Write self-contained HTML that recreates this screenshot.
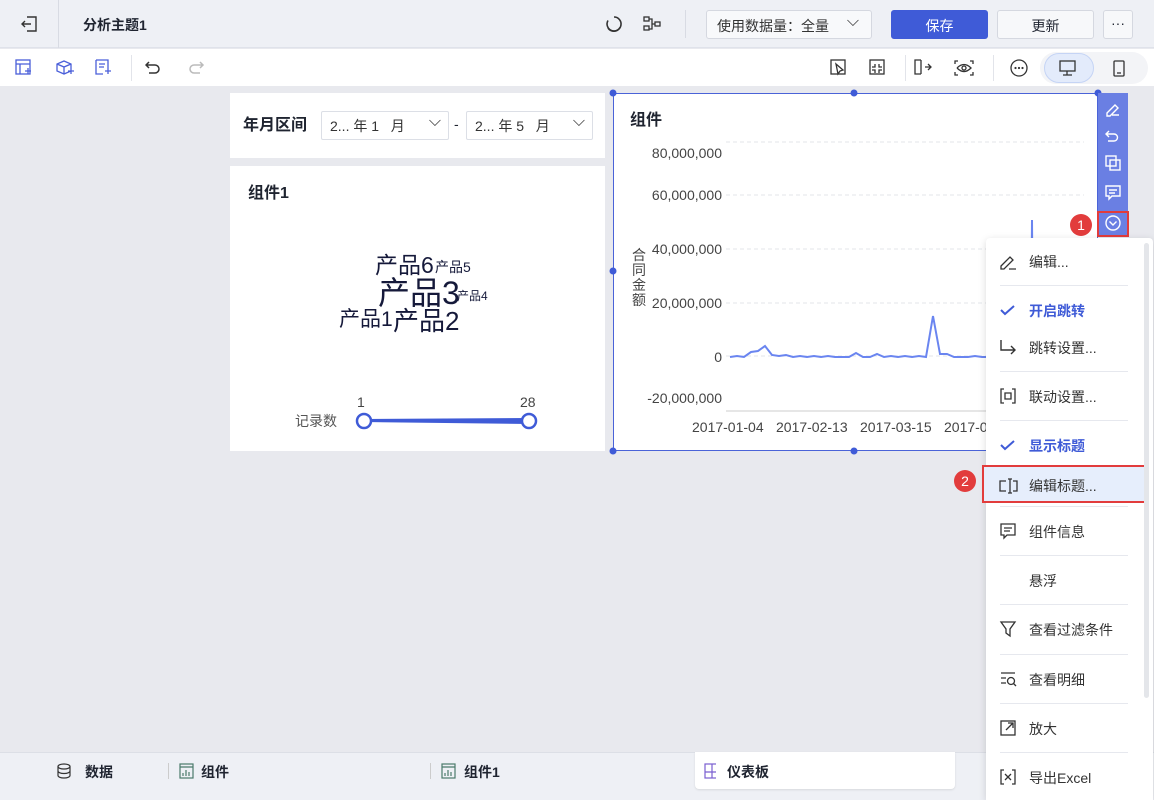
<!DOCTYPE html>
<html><head><meta charset="utf-8"><style>
*{box-sizing:border-box;margin:0;padding:0}
html,body{width:1154px;height:800px;overflow:hidden}
body{background:#e8e9ee;font-family:"Liberation Sans","Noto Sans CJK SC",sans-serif;color:#1f2430;position:relative}
.abs{position:absolute}
.top{left:0;top:0;width:1154px;height:48px;background:#eef0f5;border-bottom:1px solid #dfe2ea}
.tb{left:0;top:49px;width:1154px;height:37px;background:#fff}
.card{background:#fff}
.t{font-size:14px;white-space:nowrap}
.btn{border:1px solid #d5d8e0;border-radius:3px;background:#f7f8fa;font-size:14px;text-align:center}
.menu{left:986px;top:238px;width:167px;height:562px;background:#fff;border-radius:4px 4px 0 0;box-shadow:0 2px 8px rgba(0,0,0,.15)}
.mi{position:absolute;left:0;width:167px;height:40px;font-size:14px;color:#333}
.mi span{position:absolute;left:43px;top:11px}
.sep{position:absolute;left:14px;width:128px;height:1px;background:#e6e8ee}
.ic{position:absolute;left:12px;top:10px}
</style></head><body>
<div class="abs top"></div>
<div class="abs" style="left:58px;top:0;width:1px;height:48px;background:#d8dbe3"></div>
<svg class="abs" style="left:20px;top:15px" width="18" height="18" viewBox="0 0 18 18" fill="none" stroke="#333" stroke-width="1.4"><path d="M7 2h9v14H7M2 9h9M5 6L2 9l3 3"/></svg>
<div class="abs t" style="left:83px;top:15px;font-weight:bold">分析主题1</div>
<svg class="abs" style="left:604px;top:14px" width="20" height="20" viewBox="0 0 20 20" fill="none" stroke="#333" stroke-width="1.6"><path d="M10 3a7 7 0 1 1-6 3.5"/><path d="M16 13.5A7 7 0 0 1 4 14"/></svg>
<svg class="abs" style="left:642px;top:14px" width="20" height="20" viewBox="0 0 20 20" fill="none" stroke="#333" stroke-width="1.3"><rect x="2" y="3" width="5" height="4"/><rect x="2" y="12" width="5" height="4"/><rect x="13" y="8" width="5" height="4"/><path d="M7 5h3v10H7M10 10h3"/></svg>
<div class="abs" style="left:685px;top:10px;width:1px;height:28px;background:#d8dbe3"></div>
<div class="abs btn" style="left:706px;top:10px;width:166px;height:29px;background:#f8f9fb;text-align:left;padding:5px 10px;color:#333">使用数据量：全量 <span style="position:absolute;right:12px;top:2px;font-size:16px">⌵</span></div>
<div class="abs btn" style="left:891px;top:10px;width:97px;height:29px;background:#3f5bd7;border-color:#3f5bd7;color:#fff;padding-top:5px">保存</div>
<div class="abs btn" style="left:997px;top:10px;width:97px;height:29px;padding-top:5px">更新</div>
<div class="abs btn" style="left:1103px;top:10px;width:30px;height:29px;padding-top:4px">···</div>

<div class="abs tb"></div>
<svg class="abs" style="left:15px;top:59px" width="110" height="18" viewBox="0 0 110 18" fill="none" stroke="#4a5fd9" stroke-width="1.3"><rect x="1" y="1" width="14" height="14"/><path d="M1 5h14M5 5v10M10 12h6M13 9v6"/><path d="M49 2l7 3v7l-7 3-7-3V5zM42 5l7 3 7-3M49 8v7M53 12h6M56 9v6"/><path d="M81 1h12v8M81 1v14h7M84 5h6M84 8h5M90 12h6M93 9v6"/></svg>
<div class="abs" style="left:131px;top:55px;width:1px;height:26px;background:#e2e4ea"></div>
<svg class="abs" style="left:145px;top:58px" width="60" height="18" viewBox="0 0 60 18" fill="none" stroke-width="1.5"><path stroke="#333" d="M4 4L1 7l3 3M1 7h9a4 4 0 0 1 0 8H4"/><path stroke="#bbb" d="M55 4l3 3-3 3M58 7h-9a4 4 0 0 0 0 8h6"/></svg>
<svg class="abs" style="left:829px;top:58px" width="300" height="20" viewBox="0 0 300 20" fill="none" stroke="#333" stroke-width="1.3"><rect x="2" y="2" width="14" height="14"/><path d="M7 6l7 6-3 1-2 3z"/><rect x="41" y="2" width="14" height="14"/><path d="M46 6v3h-3M50 6v3h3M46 15v-3h-3M50 15v-3h3"/><path d="M92 2h-6v14h6M92 2v14M96 9h6M99 6l3 3-3 3"/><path d="M129 3h-3v3M141 3h3v3M129 17h-3v-3M141 17h3v-3M128 10q7-7 14 0q-7 7-14 0"/><circle cx="135" cy="10" r="2"/><circle cx="190" cy="10" r="8"/><g fill="#333" stroke="none"><circle cx="186.5" cy="10" r="1.1"/><circle cx="190" cy="10" r="1.1"/><circle cx="193.5" cy="10" r="1.1"/></g></svg>
<div class="abs" style="left:905px;top:55px;width:1px;height:26px;background:#e2e4ea"></div>
<div class="abs" style="left:993px;top:55px;width:1px;height:26px;background:#e2e4ea"></div>
<div class="abs" style="left:1040px;top:52px;width:108px;height:32px;background:#f3f4f7;border-radius:16px"></div>
<div class="abs" style="left:1044px;top:53px;width:50px;height:30px;background:#e3ebfb;border:1px solid #c5d4f5;border-radius:15px"></div>
<svg class="abs" style="left:1058px;top:59px" width="75" height="18" viewBox="0 0 75 18" fill="none" stroke="#333" stroke-width="1.3"><rect x="2" y="2" width="15" height="10"/><path d="M9 12v4M5 16h9"/><rect x="56" y="2" width="10" height="15" rx="1"/><path d="M59 14h4"/></svg>

<div class="abs card" style="left:230px;top:93px;width:375px;height:65px"></div>
<div class="abs" style="left:243px;top:115px;font-size:16px;font-weight:bold;line-height:22px">年月区间</div>
<div class="abs" style="left:321px;top:111px;width:128px;height:29px;border:1px solid #dcdfe6;border-radius:2px;font-size:14px;padding:4px 8px;color:#333">2... 年 1 &nbsp; 月<span style="position:absolute;right:7px;top:1px;font-size:16px">⌵</span></div>
<div class="abs" style="left:454px;top:116px;font-size:14px">-</div>
<div class="abs" style="left:466px;top:111px;width:127px;height:29px;border:1px solid #dcdfe6;border-radius:2px;font-size:14px;padding:4px 8px;color:#333">2... 年 5 &nbsp; 月<span style="position:absolute;right:7px;top:1px;font-size:16px">⌵</span></div>

<div class="abs card" style="left:230px;top:166px;width:375px;height:285px"></div>
<div class="abs" style="left:248px;top:179px;font-size:16px;font-weight:bold">组件1</div>
<div class="abs" style="left:375px;top:246px;font-size:23px;color:#15193a">产品6</div>
<div class="abs" style="left:435px;top:257px;font-size:14px;color:#15193a">产品5</div>
<div class="abs" style="left:378px;top:268px;font-size:32px;color:#15193a">产品3</div>
<div class="abs" style="left:457px;top:287px;font-size:12px;color:#15193a">产品4</div>
<div class="abs" style="left:339px;top:303px;font-size:21px;color:#15193a">产品1</div>
<div class="abs" style="left:393px;top:301px;font-size:26px;color:#15193a">产品2</div>
<div class="abs" style="left:295px;top:411px;font-size:14px;color:#555">记录数</div>
<div class="abs" style="left:357px;top:394px;font-size:14px;color:#444">1</div>
<div class="abs" style="left:520px;top:394px;font-size:14px;color:#444">28</div>
<svg class="abs" style="left:355px;top:410px" width="185" height="22"><path d="M9 9 L174 8 L174 14 L9 12z" fill="#3f5bd7"/><circle cx="9" cy="11" r="7" fill="#fff" stroke="#3f5bd7" stroke-width="2.5"/><circle cx="174" cy="11" r="7" fill="#fff" stroke="#3f5bd7" stroke-width="2.5"/></svg>

<div class="abs card" style="left:613px;top:93px;width:485px;height:358px;border:1.5px solid #4a63d8"></div>
<svg class="abs" style="left:608px;top:88px" width="500" height="370"><g fill="#3f5bd7"><circle cx="5" cy="5" r="3.5"/><circle cx="246" cy="5" r="3.5"/><circle cx="490" cy="5" r="3.5"/><circle cx="5" cy="183" r="3.5"/><circle cx="5" cy="363" r="3.5"/><circle cx="246" cy="363" r="3.5"/></g></svg>
<div class="abs" style="left:630px;top:106px;font-size:16px;font-weight:bold">组件</div>
<svg class="abs" style="left:614px;top:130px" width="470" height="310" font-family="Liberation Sans, sans-serif" font-size="14" fill="#444">
<g stroke="#e3e5ea" stroke-dasharray="4 3"><path d="M112 12H470M112 65H470M112 119H470M112 173H470M112 226H470"/></g>
<path d="M112 281H470" stroke="#ccc"/>
<g text-anchor="end"><text x="108" y="28">80,000,000</text><text x="108" y="70">60,000,000</text><text x="108" y="124">40,000,000</text><text x="108" y="178">20,000,000</text><text x="108" y="232">0</text><text x="108" y="273">-20,000,000</text></g>
<text x="78" y="302">2017-01-04</text><text x="162" y="302">2017-02-13</text><text x="246" y="302">2017-03-15</text><text x="330" y="302">2017-0</text>
<g font-size="14" fill="#444"><text x="18" y="130">合</text><text x="18" y="145">同</text><text x="18" y="160">金</text><text x="18" y="175">额</text></g>
<path d="M116 227L123 226L130 227L137 222L144 221L151 216L158 225L165 226L172 225L179 227L186 226L193 227L200 226L207 227L214 226L221 227L228 227L235 227L242 223L249 227L256 227L263 224L270 227L277 226L284 227L291 226L298 227L305 226L312 227L319 186L326 224L333 224L340 227L347 227L354 227L361 226L368 227L375 227L382 227L389 227L396 226L403 225L410 227L417 226 L418 90 L419 226" fill="none" stroke="#6a85f0" stroke-width="2"/>
</svg>
<div class="abs" style="left:1098px;top:93px;width:30px;height:144px;background:#6a7fe3"></div>
<svg class="abs" style="left:1098px;top:93px" width="30" height="144" fill="none" stroke="#fff" stroke-width="1.4"><path d="M9 20l8-8 3 3-8 8H9zM14 22h7"/><path d="M11 38l-3 3 3 3M8 41h8a3.5 3.5 0 0 1 0 7h-6"/><rect x="8" y="63" width="10" height="10"/><rect x="12" y="67" width="10" height="10"/><path d="M8 93h14v10H14l-3 3v-3H8zM11 97h8M11 100h6"/><circle cx="15" cy="130" r="7"/><path d="M11.5 128.5l3.5 3.5 3.5-3.5"/></svg>
<div class="abs" style="left:1097px;top:211px;width:32px;height:26px;border:2px solid #e23c3c"></div>
<div class="abs" style="left:1070px;top:214px;width:22px;height:22px;border-radius:11px;background:#e23c3c;color:#fff;font-size:14px;text-align:center;line-height:22px">1</div>

<div class="abs" style="left:0;top:752px;width:1154px;height:48px;background:#eef0f5;border-top:1px solid #dcdfe6"></div>
<div class="abs" style="left:695px;top:752px;width:260px;height:37px;background:#fff;border-radius:0 0 4px 4px;box-shadow:0 1px 2px rgba(0,0,0,.1)"></div>
<svg class="abs" style="left:56px;top:763px" width="660" height="16" fill="none" stroke-width="1.2"><g stroke="#333"><ellipse cx="8" cy="3.5" rx="6" ry="2.5"/><path d="M2 3.5v9c0 1.4 2.7 2.5 6 2.5s6-1.1 6-2.5v-9M2 8c0 1.4 2.7 2.5 6 2.5S14 9.4 14 8"/></g><g stroke="#4a7a6a"><rect x="124" y="1" width="13" height="14"/><path d="M124 4h13M127 13v-3M130 13v-6M133 13v-4"/><rect x="386" y="1" width="13" height="14"/><path d="M386 4h13M389 13v-3M392 13v-6M395 13v-4"/></g><g stroke="#7a5fd0"><rect x="649" y="1" width="14" height="14"/><path d="M649 9h14M656 1v14"/></g></svg>
<div class="abs" style="left:168px;top:763px;width:1px;height:16px;background:#ccc"></div>
<div class="abs" style="left:430px;top:763px;width:1px;height:16px;background:#ccc"></div>
<div class="abs t" style="left:85px;top:762px;font-weight:bold">数据</div>
<div class="abs t" style="left:201px;top:762px;font-weight:bold">组件</div>
<div class="abs t" style="left:464px;top:762px;font-weight:bold">组件1</div>
<div class="abs t" style="left:727px;top:762px;font-weight:bold">仪表板</div>

<div class="abs menu">
<div class="mi" style="top:3px"><svg class="ic" width="20" height="20" fill="none" stroke="#333" stroke-width="1.3"><path d="M3 15l9-9 3 3-9 9H3zM11 18h7"/></svg><span>编辑...</span></div>
<div class="sep" style="top:47px"></div>
<div class="mi" style="top:52px;color:#3f5bd7;font-weight:bold"><svg class="ic" width="20" height="20" fill="none" stroke="#3f5bd7" stroke-width="2"><path d="M3 10l4 4 9-8"/></svg><span>开启跳转</span></div>
<div class="mi" style="top:89px"><svg class="ic" width="20" height="20" fill="none" stroke="#333" stroke-width="1.4"><path d="M3 3v10h14M13 9l4 4-4 4"/></svg><span>跳转设置...</span></div>
<div class="sep" style="top:133px"></div>
<div class="mi" style="top:138px"><svg class="ic" width="20" height="20" fill="none" stroke="#333" stroke-width="1.3"><path d="M6 3H3v14h3M14 3h3v14h-3M7 7h6v6H7z"/></svg><span>联动设置...</span></div>
<div class="sep" style="top:182px"></div>
<div class="mi" style="top:187px;color:#3f5bd7;font-weight:bold"><svg class="ic" width="20" height="20" fill="none" stroke="#3f5bd7" stroke-width="2"><path d="M3 10l4 4 9-8"/></svg><span>显示标题</span></div>
<div class="mi" style="top:227px;height:38px;background:#e6eefc;border:2px solid #e23c3c;left:-4px;width:164px"><svg class="ic" style="left:14px;top:9px" width="22" height="20" fill="none" stroke="#333" stroke-width="1.3"><path d="M8 5H2v10h6M15 5h4v10h-4M12 3v14M10 3h4M10 17h4"/></svg><span style="left:45px;top:9px">编辑标题...</span></div>
<div class="sep" style="top:268px"></div>
<div class="mi" style="top:273px"><svg class="ic" width="20" height="20" fill="none" stroke="#333" stroke-width="1.3"><path d="M3 3h14v11H9l-3 3v-3H3zM6 7h8M6 10h6"/></svg><span>组件信息</span></div>
<div class="sep" style="top:317px"></div>
<div class="mi" style="top:322px"><span>悬浮</span></div>
<div class="sep" style="top:366px"></div>
<div class="mi" style="top:371px"><svg class="ic" width="20" height="20" fill="none" stroke="#333" stroke-width="1.3"><path d="M3 3h14l-5 7v7l-4-3v-4z"/></svg><span>查看过滤条件</span></div>
<div class="sep" style="top:416px"></div>
<div class="mi" style="top:421px"><svg class="ic" width="20" height="20" fill="none" stroke="#333" stroke-width="1.3"><path d="M3 4h14M3 9h5M3 14h5"/><circle cx="13" cy="12" r="3.5"/><path d="M15.5 14.5L18 17"/></svg><span>查看明细</span></div>
<div class="sep" style="top:465px"></div>
<div class="mi" style="top:470px"><svg class="ic" width="20" height="20" fill="none" stroke="#333" stroke-width="1.3"><rect x="3" y="3" width="14" height="14"/><path d="M8 12l7-7M10 5h5v5"/></svg><span>放大</span></div>
<div class="sep" style="top:514px"></div>
<div class="mi" style="top:519px"><svg class="ic" width="20" height="20" fill="none" stroke="#333" stroke-width="1.3"><path d="M6 3H3v14h3M14 3h3v14h-3M7 7l6 6M13 7l-6 6"/></svg><span>导出Excel</span></div>
<div style="position:absolute;left:158px;top:5px;width:5px;height:455px;background:#e4e6ea;border-radius:3px"></div>
</div>
<div class="abs" style="left:954px;top:470px;width:22px;height:22px;border-radius:11px;background:#e23c3c;color:#fff;font-size:14px;text-align:center;line-height:22px">2</div>
</body></html>
